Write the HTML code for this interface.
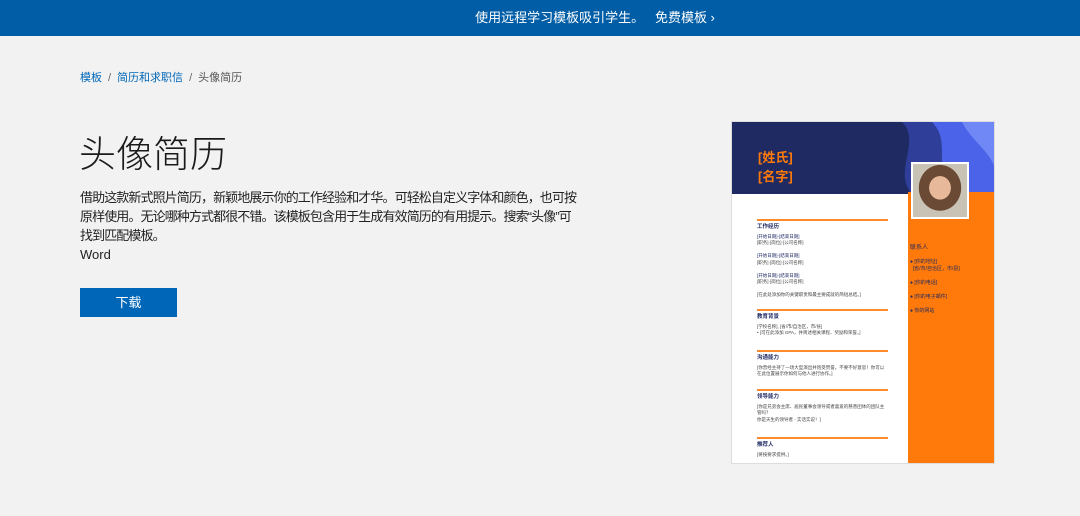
<!DOCTYPE html>
<html><head><meta charset="utf-8"><style>
*{margin:0;padding:0;box-sizing:border-box}
body{width:1080px;height:516px;background:#f2f2f2;font-family:"Liberation Sans","Noto Sans CJK SC",sans-serif;position:relative;overflow:hidden;color:#222}
.top{position:absolute;left:0;top:0;width:1080px;height:36px;background:#005da6;color:#fff;font-size:13px;text-align:center;line-height:35px;padding-left:110px}
.bc{position:absolute;left:80px;top:69px;font-size:11px;color:#555}
.bc a{color:#0067b8;text-decoration:none}
.bc span{margin:0 6px;color:#666}
h1{position:absolute;left:79px;top:124px;font-size:37px;font-weight:300;color:#1a1a1a;letter-spacing:0}
.desc{position:absolute;left:80px;top:188px;white-space:nowrap;font-size:13px;letter-spacing:-0.9px;line-height:19px;color:#222}
.word{position:absolute;left:80px;top:247px;font-size:13px}
.btn{position:absolute;left:80px;top:288px;width:97px;height:29px;background:#0067b8;color:#fff;font-size:13px;text-align:center;line-height:29px}
.res{position:absolute;left:731px;top:121px;width:264px;height:343px;background:#fff;overflow:hidden;border:1px solid #ddd}
.hd{position:absolute;left:0;top:0;width:264px;height:72px;background:#1f2a63}
.or{position:absolute;left:176px;top:70px;width:88px;height:273px;background:#ff7a0a}
.ph{position:absolute;left:179px;top:40px;width:58px;height:57px;background:#fff;padding:2px}
.ph div{width:100%;height:100%;background:radial-gradient(ellipse at 50% 45%,#e8b89a 0 28%,#6b4a35 29% 55%,#c9c3b5 56%)}
.nm{position:absolute;left:26px;top:26px;color:#ff7a0a;font-size:13px;line-height:19px;font-weight:bold}
.sec{position:absolute;left:25px;width:131px;border-top:2px solid #ff8a2a;font-size:4.5px;line-height:6.5px;color:#444;padding-top:3px}
.sec b{display:block;color:#1f2a63;font-size:5.5px;margin-bottom:3px}
.ct{position:absolute;left:178px;top:123px;font-size:5px;color:#1f2a63;line-height:7px}
</style></head><body>
<div class="top">使用远程学习模板吸引学生。&nbsp;&nbsp; 免费模板 ›</div>
<div class="bc"><a>模板</a><span>/</span><a>简历和求职信</a><span>/</span>头像简历</div>
<h1>头像简历</h1>
<div class="desc">借助这款新式照片简历，新颖地展示你的工作经验和才华。可轻松自定义字体和颜色，也可按<br>原样使用。无论哪种方式都很不错。该模板包含用于生成有效简历的有用提示。搜索“头像”可<br>找到匹配模板。</div>
<div class="word">Word</div>
<div class="btn">下载</div>
<div class="res">
<div class="hd"></div>
<svg style="position:absolute;left:150px;top:0" width="114" height="72"><path d="M20 0 C40 20 10 50 30 72 L114 72 L114 0Z" fill="#2f3f99"/><path d="M50 0 C70 20 50 45 70 72 L114 72 L114 0Z" fill="#4a63e8"/><path d="M80 0 C90 20 110 30 114 50 L114 0Z" fill="#7088f5"/></svg>
<div class="or"></div>
<div class="nm">[姓氏]<br>[名字]</div>
<div class="ph"><div></div></div>
<div class="sec" style="top:97px"><b>工作经历</b><span style="color:#1f2a63">[开始日期]-[结束日期]</span><br>[职务]·[岗位]·[公司名称]<br><br><span style="color:#1f2a63">[开始日期]-[结束日期]</span><br>[职务]·[岗位]·[公司名称]<br><br><span style="color:#1f2a63">[开始日期]-[结束日期]</span><br>[职务]·[岗位]·[公司名称]<br><br>[在此处添加你的关键职责和最主要成就的简短总结。]</div>
<div class="sec" style="top:187px"><b>教育背景</b>[学校名称], [省/市/自治区，市/县]<br>• [可在此添加 GPA，并简述相关课程、奖励和荣誉。]</div>
<div class="sec" style="top:228px"><b>沟通能力</b>[你曾经主持了一场大型演出并饱受赞誉。不要不好意思！你可以在此位置展示你如何与他人进行协作。]</div>
<div class="sec" style="top:267px"><b>领导能力</b>[你是兄弟会主席、居民董事会领导或者喜爱的慈善团体的团队主管吗？<br>你是天生的领导者 - 实话实说！]</div>
<div class="sec" style="top:315px"><b>推荐人</b>[将按要求提供。]</div>
<div class="ct"><span style="font-size:6px">联系人</span><br><br>● [你的地址]<br>&nbsp;&nbsp;[省/市/自治区，市/县]<br><br>● [你的电话]<br><br>● [你的电子邮件]<br><br>● 你的网站</div>
</div>
</body></html>
